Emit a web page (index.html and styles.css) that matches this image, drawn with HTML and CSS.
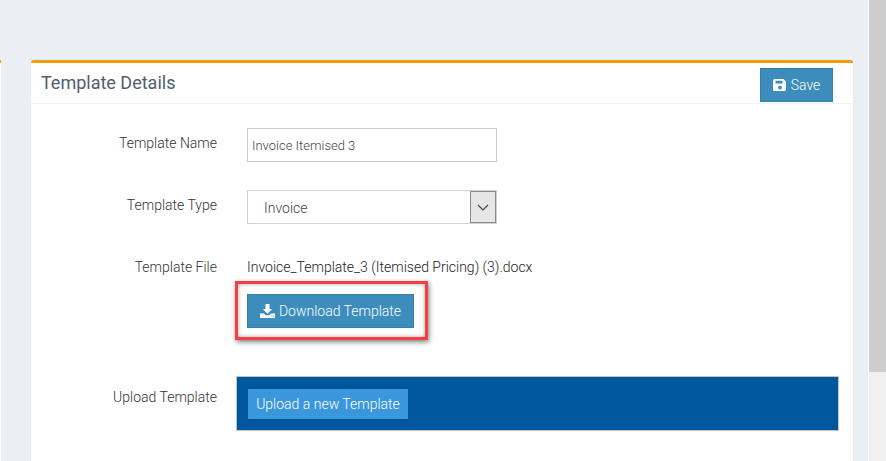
FILE: index.html
```html
<!DOCTYPE html>
<html lang="en">
<head>
    <meta charset="UTF-8">
    <meta name="viewport" content="width=device-width, initial-scale=1.0">
    <title>Template Details</title>
    <link rel="stylesheet" href="styles.css">
</head>
<body>
    <div class="page">
        <div class="content">
            <div class="side-panel"></div>
            <div class="card">
                <div class="card-header">
                    <h1>Template Details</h1>
                    <button class="btn save-btn">
                        <svg class="icon" width="14" height="14" viewBox="0 0 14 14"><path fill="#fff" fill-rule="evenodd" d="M1.5 1H10.5L13 3.5V11.5A1.5 1.5 0 0 1 11.500 13H1.500A1.500 1.500 0 0 1 0 11.500V2.500A1.500 1.500 0 0 1 1.500 1ZM2.500 2.800V5.600H9.500V2.800ZM7 7.800A1.900 1.900 0 1 0 7 11.600A1.900 1.900 0 1 0 7 7.800Z"/></svg>
                        Save
                    </button>
                </div>
                <div class="card-body">
                    <div class="row name-row">
                        <label>Template Name</label>
                        <input class="text-input" type="text" value="Invoice Itemised 3">
                    </div>
                    <div class="row type-row">
                        <label>Template Type</label>
                        <div class="select-box">
                            <span class="select-value">Invoice</span>
                            <span class="select-arrow">
                                <svg width="12" height="7" viewBox="0 0 12 7"><path d="M1 1L6 6L11 1" fill="none" stroke="#444" stroke-width="1.200"/></svg>
                            </span>
                        </div>
                    </div>
                    <div class="row file-row">
                        <label>Template File</label>
                        <div class="file-info">
                            <div class="file-name">Invoice_Template_3 (Itemised Pricing) (3).docx</div>
                            <div class="highlight">
                                <button class="btn download-btn">
                                    <svg class="icon" width="15" height="14" viewBox="0 0 15 14"><path fill="#fff" d="M5.500 0H9.500V5H12.200L7.500 9.700L2.800 5H5.500ZM0 9.500H3.800L5.800 11.300H9.200L11.200 9.500H15V14H0ZM11.300 11.600V12.600H12.300V11.600ZM13 11.600V12.600H14V11.600Z"/></svg>
                                    Download Template
                                </button>
                            </div>
                        </div>
                    </div>
                    <div class="row upload-row">
                        <label>Upload Template</label>
                        <div class="upload-box">
                            <button class="upload-btn">Upload a new Template</button>
                        </div>
                    </div>
                </div>
            </div>
        </div>
        <div class="scrollbar"><div class="thumb"></div></div>
    </div>
</body>
</html>
```

FILE: styles.css
```css
* {
    box-sizing: border-box;
}
html, body {
    margin: 0;
    height: 100%;
    overflow: hidden;
}
body {
    font-family: Roboto, sans-serif;
    font-size: 14px;
    font-weight: 300;
    color: #333;
    background-color: #fff;
}
.page {
    display: flex;
    height: 461px;
}
.content {
    flex: 1;
    display: flex;
    align-items: flex-start;
    padding-top: 60px;
    background: #ebeef3;
    margin-right: 1px;
}
.side-panel {
    width: 1px;
    height: 401px;
    background: #fff;
    border-top: 3px solid #f39c12;
    margin-right: 30px;
}
.card {
    width: 822px;
    height: 401px;
    background: white;
    border-top: 3px solid #f39c12;
    border-radius: 3px 3px 0 0;
    box-shadow: 0 0 1px rgba(0, 0, 0, 0.15);
}
.card-header {
    height: 41px;
    display: flex;
    justify-content: space-between;
    align-items: flex-start;
    padding: 5px 20px 0 10px;
    border-bottom: 1px solid #f1f1f1;
}
h1 {
    margin: 3px 0 0;
    font-size: 18px;
    font-weight: 400;
    line-height: 24px;
    color: #4f5e6c;
}
.btn {
    display: flex;
    align-items: center;
    color: white;
    background: #3c8dbc;
    border: 1px solid #367fa9;
    font-family: Roboto, sans-serif;
    font-size: 14px;
    font-weight: 300;
    padding: 0;
}
.save-btn {
    width: 73px;
    height: 34px;
    justify-content: center;
    gap: 4px;
}
.card-body {
    padding-top: 24px;
}
.row {
    display: flex;
    align-items: flex-start;
}
.row label {
    width: 186px;
    text-align: right;
    margin-right: 30px;
}
.name-row label {
    padding-top: 7px;
}
.text-input {
    width: 250px;
    height: 34px;
    border: 1px solid #ccc;
    padding: 0 4px;
    font-family: Roboto, sans-serif;
    font-size: 13px;
    font-weight: 300;
    color: #444;
    outline: none;
}
.type-row {
    margin-top: 28px;
}
.type-row label {
    padding-top: 7px;
}
.select-box {
    width: 250px;
    height: 34px;
    display: flex;
    justify-content: space-between;
    border: 1px solid #d2d2de;
    background: white;
}
.select-value {
    padding: 9px 0 0 16px;
    color: #444;
}
.select-arrow {
    width: 26px;
    display: flex;
    align-items: center;
    justify-content: center;
    background: #e6e6e6;
    border: 1px solid #8a8a8a;
}
.file-row {
    margin-top: 35px;
}
.file-info {
    display: flex;
    flex-direction: column;
}
.file-name {
    line-height: 16px;
    color: #222;
}
.highlight {
    width: 193px;
    height: 59px;
    margin: 6px 0 0 -12px;
    padding: 10px 0 0 9px;
    border: 3px solid #f33f43;
    box-shadow: 1px 2px 5px rgba(0, 0, 0, 0.5), inset 0 0 4px rgba(0, 0, 0, 0.35);
}
.download-btn {
    width: 167px;
    height: 34px;
    justify-content: center;
    gap: 4px;
}
.upload-row {
    margin-top: 36px;
}
.upload-row label {
    padding-top: 13px;
    margin-right: 19px;
}
.upload-box {
    width: 603px;
    height: 55px;
    padding: 12px 11px;
    background: #01579b;
    border: 1px solid #c4c4c4;
}
.upload-btn {
    display: block;
    width: 160px;
    height: 30px;
    padding: 0;
    border: none;
    color: white;
    background: #3a97dc;
    font-family: Roboto, sans-serif;
    font-size: 14px;
    font-weight: 300;
}
.scrollbar {
    width: 17px;
    background: #f0f0f0;
}
.thumb {
    height: 372px;
    background: #cdcdcd;
}
```
